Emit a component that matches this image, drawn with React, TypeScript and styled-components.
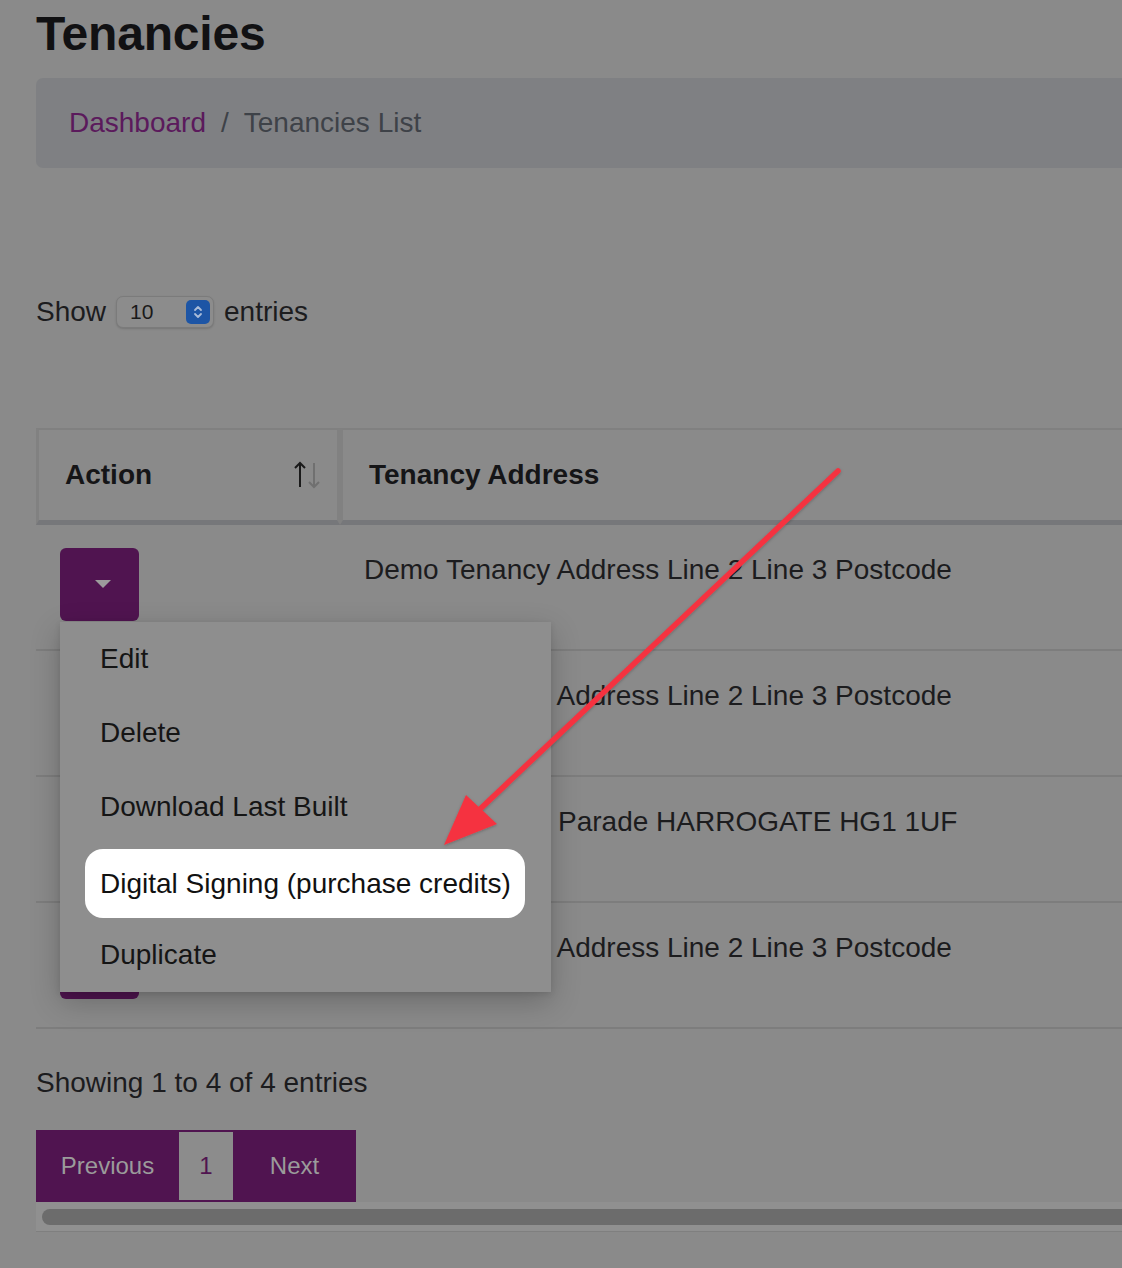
import React from "react";
import styled, { createGlobalStyle } from "styled-components";

const GlobalStyle = createGlobalStyle`
  html, body {
    margin: 0;
    padding: 0;
    background: #8a8a8a;
    overflow: hidden;
  }
  body {
    font-family: "Liberation Sans", Arial, Helvetica, sans-serif;
    color: #1c1c1e;
  }
`;

const Page = styled.div`
  position: relative;
  width: 1122px;
  height: 1268px;
  overflow: hidden;
`;

const Content = styled.main`
  width: 1300px;
  padding: 6px 0 0 36px;
  box-sizing: border-box;
`;

const Title = styled.h1`
  margin: 0;
  font-size: 48px;
  line-height: 56px;
  font-weight: 700;
  color: #111113;
  letter-spacing: -0.2px;
`;

const Breadcrumb = styled.nav`
  margin-top: 16px;
  height: 90px;
  background: #7f8083;
  border-radius: 7px;
  display: flex;
  align-items: center;
  padding-left: 33px;
  font-size: 28px;
  gap: 15px;
`;

const Crumb = styled.span<{ $active?: boolean }>`
  color: ${(p) => (p.$active ? "#3e4248" : "#5b1a5c")};
`;

const Sep = styled.span`
  color: #3e4248;
`;

const LengthRow = styled.div`
  margin-top: 128px;
  display: flex;
  align-items: center;
  gap: 10px;
  font-size: 28px;
  height: 32px;
`;

const SelectBox = styled.div`
  width: 98px;
  height: 32px;
  box-sizing: border-box;
  border: 1px solid #7b7b7b;
  border-radius: 7px;
  background: #8c8c8c;
  box-shadow: 0 1px 2px rgba(0, 0, 0, 0.15);
  display: flex;
  align-items: center;
  justify-content: space-between;
  padding: 0 3px 0 13px;
  font-size: 21px;
  color: #1a1a1a;
`;

const SelectArrows = styled.span`
  width: 24px;
  height: 24px;
  border-radius: 5px;
  background: #1d55a5;
  display: flex;
  align-items: center;
  justify-content: center;
`;

const TableWrap = styled.div`
  margin-top: 100px;
`;

const Table = styled.table`
  border-collapse: separate;
  border-spacing: 0;
  table-layout: fixed;
  width: 1264px;
  font-size: 28px;
`;

const Th = styled.th<{ $first?: boolean }>`
  height: 90px;
  padding: 0 ${(p) => (p.$first ? "16px" : "26px")} 0 26px;
  text-align: left;
  font-weight: 700;
  color: #151517;
  border-top: 2px solid #808080;
  border-left: 3px solid #818181;
  border-right: 3px solid #818181;
  border-bottom: 5px solid #76777a;
  vertical-align: middle;
`;

const HeadInner = styled.div`
  display: flex;
  align-items: center;
  justify-content: space-between;
`;

const Td = styled.td`
  padding: 23px 24px 28px;
  border-bottom: 2px solid #7d7d7d;
  vertical-align: top;
  line-height: 44px;
  color: #1c1c1e;
  white-space: nowrap;
`;

const Dropdown = styled.div`
  position: relative;
  width: 79px;
`;

const ActionButton = styled.button`
  width: 79px;
  height: 73px;
  border: none;
  border-radius: 6px;
  background: #501450;
  display: flex;
  align-items: center;
  justify-content: center;
  padding: 0 0 0 6px;
  cursor: pointer;
`;

const Caret = styled.span`
  width: 0;
  height: 0;
  margin-top: -2px;
  border-left: 8px solid transparent;
  border-right: 8px solid transparent;
  border-top: 8px solid #9c9c9c;
`;

const Menu = styled.ul`
  position: absolute;
  top: 74px;
  left: 0;
  z-index: 5;
  width: 491px;
  margin: 0;
  padding: 0;
  list-style: none;
  background: #8e8e8e;
  box-shadow: 0 10px 28px rgba(0, 0, 0, 0.22), 0 2px 6px rgba(0, 0, 0, 0.1);
`;

const MenuItem = styled.li`
  height: 74px;
  display: flex;
  align-items: center;
  padding-left: 40px;
  font-size: 28px;
  color: #151515;
  line-height: 1;
`;

const Highlight = styled.span`
  display: inline-flex;
  align-items: center;
  align-self: flex-end;
  height: 69px;
  margin-left: -15px;
  padding: 0 14px 0 15px;
  background: #ffffff;
  border-radius: 18px;
  color: #111;
  white-space: nowrap;
`;

const Info = styled.div`
  margin-top: 32px;
  font-size: 28px;
  line-height: 44px;
  color: #1c1c1e;
`;

const Pagination = styled.div`
  margin-top: 25px;
  display: flex;
  height: 72px;
  width: 320px;
  background: #501450;
`;

const PageBtn = styled.span<{ $w: number; $current?: boolean }>`
  width: ${(p) => p.$w}px;
  box-sizing: border-box;
  display: flex;
  align-items: center;
  justify-content: center;
  font-size: 24px;
  color: ${(p) => (p.$current ? "#501450" : "#9b9b9b")};
  background: ${(p) => (p.$current ? "#8c8c8c" : "#501450")};
  ${(p) => (p.$current ? "margin: 2px 0;" : "")}
`;

const ScrollTrack = styled.div`
  height: 30px;
  width: 1200px;
  background: #909090;
  border-bottom: 1px solid #7f7f7f;
  box-sizing: border-box;
  display: flex;
  align-items: center;
  padding-left: 6px;
`;

const ScrollThumb = styled.div`
  height: 16px;
  flex: 1;
  border-radius: 8px;
  background: #6c6c6c;
`;

const Annotation = styled.svg`
  position: absolute;
  left: 0;
  top: 0;
  pointer-events: none;
  z-index: 10;
`;

const rows = [
  "Demo Tenancy Address Line 2 Line 3 Postcode",
  "Demo Tenancy Address Line 2 Line 3 Postcode",
  "Demo Tenancy Parade HARROGATE HG1 1UF",
  "Demo Tenancy Address Line 2 Line 3 Postcode",
];

const menuItems = [
  "Edit",
  "Delete",
  "Download Last Built",
  "Digital Signing (purchase credits)",
  "Duplicate",
];

const SortIcon = () => (
  <svg width="28" height="28" viewBox="0 0 28 28">
    <path d="M7 26V2M2 7l5-5 5 5" stroke="#1a1a1a" strokeWidth="2" fill="none" />
    <path d="M21 2v24M16 21l5 5 5-5" stroke="#707070" strokeWidth="2" fill="none" />
  </svg>
);

export default function App() {
  return (
    <Page>
      <GlobalStyle />
      <Content>
        <Title>Tenancies</Title>
        <Breadcrumb>
          <Crumb>Dashboard</Crumb>
          <Sep>/</Sep>
          <Crumb $active>Tenancies List</Crumb>
        </Breadcrumb>

        <LengthRow>
          <span>Show</span>
          <SelectBox>
            <span>10</span>
            <SelectArrows>
              <svg width="12" height="16" viewBox="0 0 12 16">
                <path d="M3 6l3-3 3 3M3 10l3 3 3-3" stroke="#a9bcd9" strokeWidth="1.8" fill="none" strokeLinecap="round" strokeLinejoin="round" />
              </svg>
            </SelectArrows>
          </SelectBox>
          <span>entries</span>
        </LengthRow>

        <TableWrap>
          <Table>
            <colgroup>
              <col style={{ width: 304 }} />
              <col />
            </colgroup>
            <thead>
              <tr>
                <Th $first>
                  <HeadInner>
                    <span>Action</span>
                    <SortIcon />
                  </HeadInner>
                </Th>
                <Th>Tenancy Address</Th>
              </tr>
            </thead>
            <tbody>
              {rows.map((r, i) => (
                <tr key={i}>
                  <Td>
                    <Dropdown>
                      <ActionButton aria-label="Actions">
                        <Caret />
                      </ActionButton>
                      {i === 0 && (
                        <Menu>
                          {menuItems.map((m, j) => (
                            <MenuItem key={m}>
                              {j === 3 ? <Highlight>{m}</Highlight> : m}
                            </MenuItem>
                          ))}
                        </Menu>
                      )}
                    </Dropdown>
                  </Td>
                  <Td>{r}</Td>
                </tr>
              ))}
            </tbody>
          </Table>
        </TableWrap>

        <Info>Showing 1 to 4 of 4 entries</Info>

        <Pagination>
          <PageBtn $w={143}>Previous</PageBtn>
          <PageBtn $w={54} $current>
            1
          </PageBtn>
          <PageBtn $w={123}>Next</PageBtn>
        </Pagination>
        <ScrollTrack>
          <ScrollThumb />
        </ScrollTrack>
      </Content>

      <Annotation width="1122" height="1268" viewBox="0 0 1122 1268">
        <defs>
          <filter id="sh" x="-10%" y="-10%" width="120%" height="120%">
            <feDropShadow dx="0" dy="1" stdDeviation="1.5" floodColor="#000" floodOpacity="0.25" />
          </filter>
        </defs>
        <g filter="url(#sh)">
          <line x1="838" y1="471" x2="478" y2="811" stroke="#f5333f" strokeWidth="5.5" strokeLinecap="round" />
          <polygon points="444,845 466,795 497,824" fill="#f5333f" />
        </g>
      </Annotation>
    </Page>
  );
}
